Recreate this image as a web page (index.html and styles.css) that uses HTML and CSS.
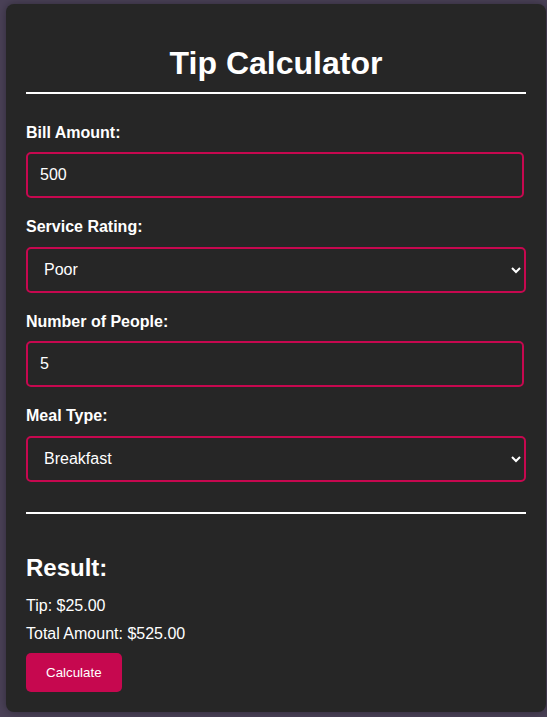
FILE: index.html
```html
<!DOCTYPE html>
<html lang="en">
<head>
<meta charset="utf-8">
<title>Tip Calculator</title>
<link rel="stylesheet" href="styles.css">
</head>
<body>
  <div class="card">
    <h1 class="title">Tip Calculator</h1>
    <form class="form">
      <label class="label" for="bill">Bill Amount:</label>
      <input class="control control-input" id="bill" type="number" value="500">

      <label class="label" for="service">Service Rating:</label>
      <select class="control control-select" id="service">
        <option>Poor</option>
        <option>Good</option>
        <option>Excellent</option>
      </select>

      <label class="label" for="people">Number of People:</label>
      <input class="control control-input" id="people" type="number" value="5">

      <label class="label" for="meal">Meal Type:</label>
      <select class="control control-select" id="meal">
        <option>Breakfast</option>
        <option>Lunch</option>
        <option>Dinner</option>
      </select>
    </form>
    <hr class="divider">
    <div class="result">
      <h2 class="result-title">Result:</h2>
      <p class="result-line">Tip: $25.00</p>
      <p class="result-line">Total Amount: $525.00</p>
      <button class="btn" type="button">Calculate</button>
    </div>
  </div>
</body>
</html>
```
FILE: styles.css
```css
html, body {
  margin: 0;
}
body {
  padding: 4px 1px 6px 6px;
  background: #4a4157;
  font-family: "Liberation Sans", Arial, sans-serif;
  color: #ffffff;
}
.card {
  width: 500px;
  padding: 20px;
  background: #262626;
  border-radius: 8px;
  box-shadow: 0 0 8px rgba(0, 0, 0, 0.35);
}
.title {
  margin: 21px 0 30px;
  padding-bottom: 10px;
  border-bottom: 2px solid #ffffff;
  font-size: 32px;
  font-weight: bold;
  text-align: center;
}
.form {
  display: flex;
  flex-direction: column;
}
.label {
  display: block;
  margin-bottom: 10px;
  font-size: 16px;
  font-weight: bold;
  line-height: 18.4px;
}
.control {
  box-sizing: border-box;
  height: 46px;
  margin: 0 0 20px;
  padding: 0 12px;
  border: 2px solid #c6084f;
  border-radius: 5px;
  background: #262626;
  color: #ffffff;
  font-family: "Liberation Sans", Arial, sans-serif;
  font-size: 16px;
  outline: none;
}
.control-input {
  width: calc(100% - 2px);
  -moz-appearance: textfield;
}
.control-input::-webkit-outer-spin-button,
.control-input::-webkit-inner-spin-button {
  -webkit-appearance: none;
  margin: 0;
}
.control-select {
  width: 100%;
  color-scheme: dark;
}
.divider {
  margin: 10px 0 0;
  height: 2px;
  border: 0;
  background: #ffffff;
}
.result {
  margin-top: 40px;
}
.result-title {
  margin: 0 0 15px;
  font-size: 24px;
  font-weight: bold;
}
.result-line {
  margin: 10px 0;
  font-size: 16px;
  line-height: 18.4px;
}
.btn {
  padding: 12px 20px;
  border: 0;
  border-radius: 5px;
  background: #c6084f;
  color: #ffffff;
  font-family: "Liberation Sans", Arial, sans-serif;
  font-size: 13.33px;
}
```
